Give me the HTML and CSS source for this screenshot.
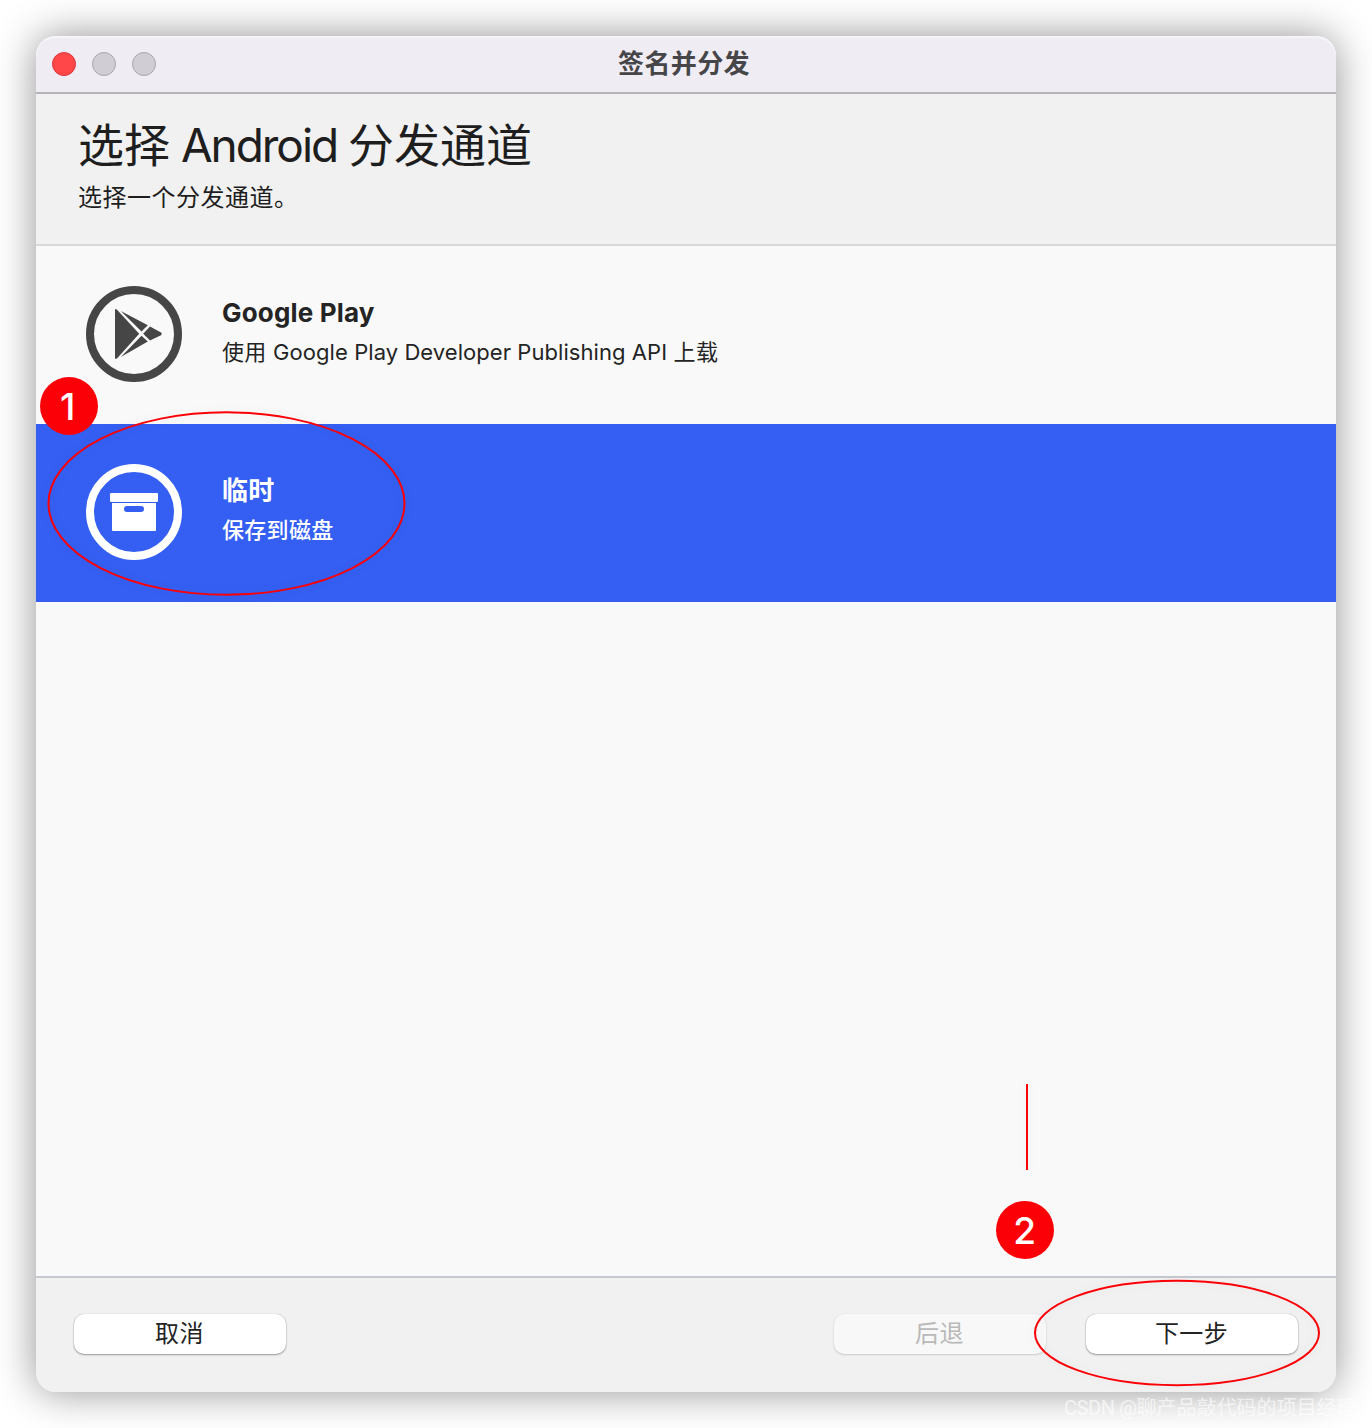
FILE: index.html
```html
<!DOCTYPE html>
<html lang="zh-CN">
<head>
<meta charset="utf-8">
<title>签名并分发</title>
<link rel="stylesheet" href="styles.css">
</head>
<body>
<main class="window">
  <div class="titlebar">
    <div class="lights"><span class="light light-close"></span><span class="light"></span><span class="light"></span></div>
    <div class="title">签名并分发</div>
  </div>
  <header class="header">
    <h1 class="heading">选择 <span class="heading-latin">Android</span> 分发通道</h1>
    <p class="subheading">选择一个分发通道。</p>
  </header>
  <section class="list">
    <div class="row">
      <svg class="row-icon" viewBox="0 0 96 96">
        <circle cx="48" cy="48" r="44" fill="none" stroke="currentColor" stroke-width="8"/>
        <g fill="currentColor">
          <path d="M29 24.2Q29 22.2 30.8 23.6L53.2 47.8L31.4 72Q29 74 29 71.6Z"/>
          <path d="M34.8 25L61.8 39.2L55.5 45.5Z"/>
          <path d="M34.8 71L61.8 55.6L55.5 49.8Z"/>
          <path d="M64 40.4L75 46.6Q76.8 48 75 49.2L64 54.6L57.2 47.8Z"/>
        </g>
      </svg>
      <div class="row-text">
        <div class="row-title">Google Play</div>
        <div class="row-desc">使用 <span class="desc-latin">Google Play Developer Publishing API</span> 上载</div>
      </div>
    </div>
    <div class="row row-selected">
      <svg class="row-icon" viewBox="0 0 96 96">
        <circle cx="48" cy="48" r="44" fill="none" stroke="currentColor" stroke-width="8"/>
        <g fill="currentColor">
          <rect x="24" y="29" width="48" height="9" rx="1.2"/>
          <path fill-rule="evenodd" d="M26 39H70V66Q70 67 69 67H27Q26 67 26 66ZM41 42A3 3 0 0 0 41 48H55A3 3 0 0 0 55 42Z"/>
        </g>
      </svg>
      <div class="row-text">
        <div class="row-title">临时</div>
        <div class="row-desc">保存到磁盘</div>
      </div>
    </div>
  </section>
  <footer class="footer">
    <button class="button">取消</button>
    <div class="button-group">
      <button class="button button-off">后退</button>
      <button class="button">下一步</button>
    </div>
  </footer>
</main>
<svg class="marks" viewBox="0 0 1372 1428">
  <g class="mark-lines">
    <ellipse cx="226.5" cy="503.5" rx="178" ry="91.3"/>
    <ellipse cx="1177" cy="1333" rx="142" ry="52.2"/>
    <path d="M1027 1084V1170"/>
  </g>
</svg>
<div class="badge badge-one">1</div>
<div class="badge badge-two">2</div>
<div class="watermark"><span class="watermark-latin">CSDN @</span>聊产品敲代码的项目经理</div>
</body>
</html>
```
FILE: styles.css
```css
* { box-sizing: border-box; }
body {
  position: relative;
  width: 1372px;
  height: 1428px;
  margin: 0;
  padding: 36px;
  overflow: hidden;
  background: #fff;
  color: #242424;
  font-family: Inter, "Noto Sans CJK SC", sans-serif;
}
.window {
  display: flex;
  flex-direction: column;
  height: 1356px;
  border-radius: 20px;
  background: #f9f9f9;
  box-shadow: 0 0 40px rgba(0, 0, 0, .43);
}
.titlebar {
  display: grid;
  grid-template-columns: 1fr auto 1fr;
  align-items: center;
  height: 58px;
  padding: 0 20px 0 16px;
  border-bottom: 2px solid #b4b3b8;
  border-radius: 20px 20px 0 0;
  background: #efecf4;
  box-shadow: inset 0 2px 0 #f6f4f9;
}
.lights { display: flex; gap: 16px; }
.light {
  width: 24px;
  height: 24px;
  border: 1px solid #aaa8ae;
  border-radius: 50%;
  background: #d0cdd4;
}
.light-close { border-color: #e3343a; background: #ff4649; }
.title {
  color: #464548;
  font-size: 26px;
  font-weight: 700;
  line-height: 40px;
  letter-spacing: .4px;
}
.header {
  height: 152px;
  padding: 17px 42px 0;
  border-bottom: 2px solid #d8d8d8;
  background: #f1f1f1;
  color: #1e1e1e;
}
.heading {
  margin: 0;
  font-size: 46px;
  font-weight: 400;
  line-height: 68px;
  word-spacing: -2px;
  white-space: nowrap;
}
.heading-latin { letter-spacing: -2.05px; }
.subheading { margin: 0; padding-top: 1px; font-size: 24px; line-height: 36px; letter-spacing: .5px; }
.list { flex: 1; }
.row { display: flex; align-items: center; gap: 40px; height: 178px; padding: 0 50px 2px; }
.row-icon { width: 96px; height: 96px; color: #464646; }
.row-selected { background: #345ff2; color: #fff; }
.row-selected .row-icon { color: #fff; }
.row-text { padding-bottom: 4px; }
.row-title { font-size: 26px; font-weight: 700; line-height: 40px; letter-spacing: .18px; }
.row-desc { font-size: 22px; line-height: 38px; letter-spacing: .3px; white-space: nowrap; }
.desc-latin { letter-spacing: .06px; }
.row-selected .row-desc { font-weight: 500; }
.footer {
  display: flex;
  justify-content: space-between;
  height: 116px;
  padding: 36px 38px 0;
  border-top: 2px solid #c6cad0;
  border-radius: 0 0 20px 20px;
  background: #f1f1f1;
}
.button-group { display: flex; gap: 40px; }
.button {
  width: 212px;
  height: 40px;
  padding: 0 1px 1px 0;
  border: 0;
  border-radius: 10px;
  background: #fff;
  box-shadow: 0 1px 2px rgba(0, 0, 0, .35), 0 0 1px rgba(0, 0, 0, .3);
  color: #242424;
  font: 24px/38px Inter, "Noto Sans CJK SC", sans-serif;
  letter-spacing: .4px;
}
.button-off {
  background: #f8f8f8;
  box-shadow: 0 1px 2px rgba(0, 0, 0, .15), 0 0 1px rgba(0, 0, 0, .12);
  color: #b9b9b9;
}
.marks { position: absolute; inset: 0; width: 1372px; height: 1428px; }
.mark-lines {
  fill: none;
  stroke: #fb0007;
  stroke-width: 2;
  filter: drop-shadow(0 0 5px rgba(0, 0, 0, .06));
}
.badge {
  position: absolute;
  width: 58px;
  height: 58px;
  border-radius: 50%;
  background: #fb0007;
  color: #fff;
  font-size: 37px;
  font-weight: 500;
  line-height: 59px;
  text-align: center;
}
.badge-one { left: 39.7px; top: 376.5px; padding-right: 2px; }
.badge-two { left: 995.7px; top: 1201px; }
.watermark {
  position: absolute;
  left: 1064px;
  top: 1393px;
  color: rgba(255, 255, 255, .65);
  font: 20px/30px Roboto, "Noto Sans CJK SC", sans-serif;
  white-space: nowrap;
}
.watermark-latin { letter-spacing: -.45px; }
```
